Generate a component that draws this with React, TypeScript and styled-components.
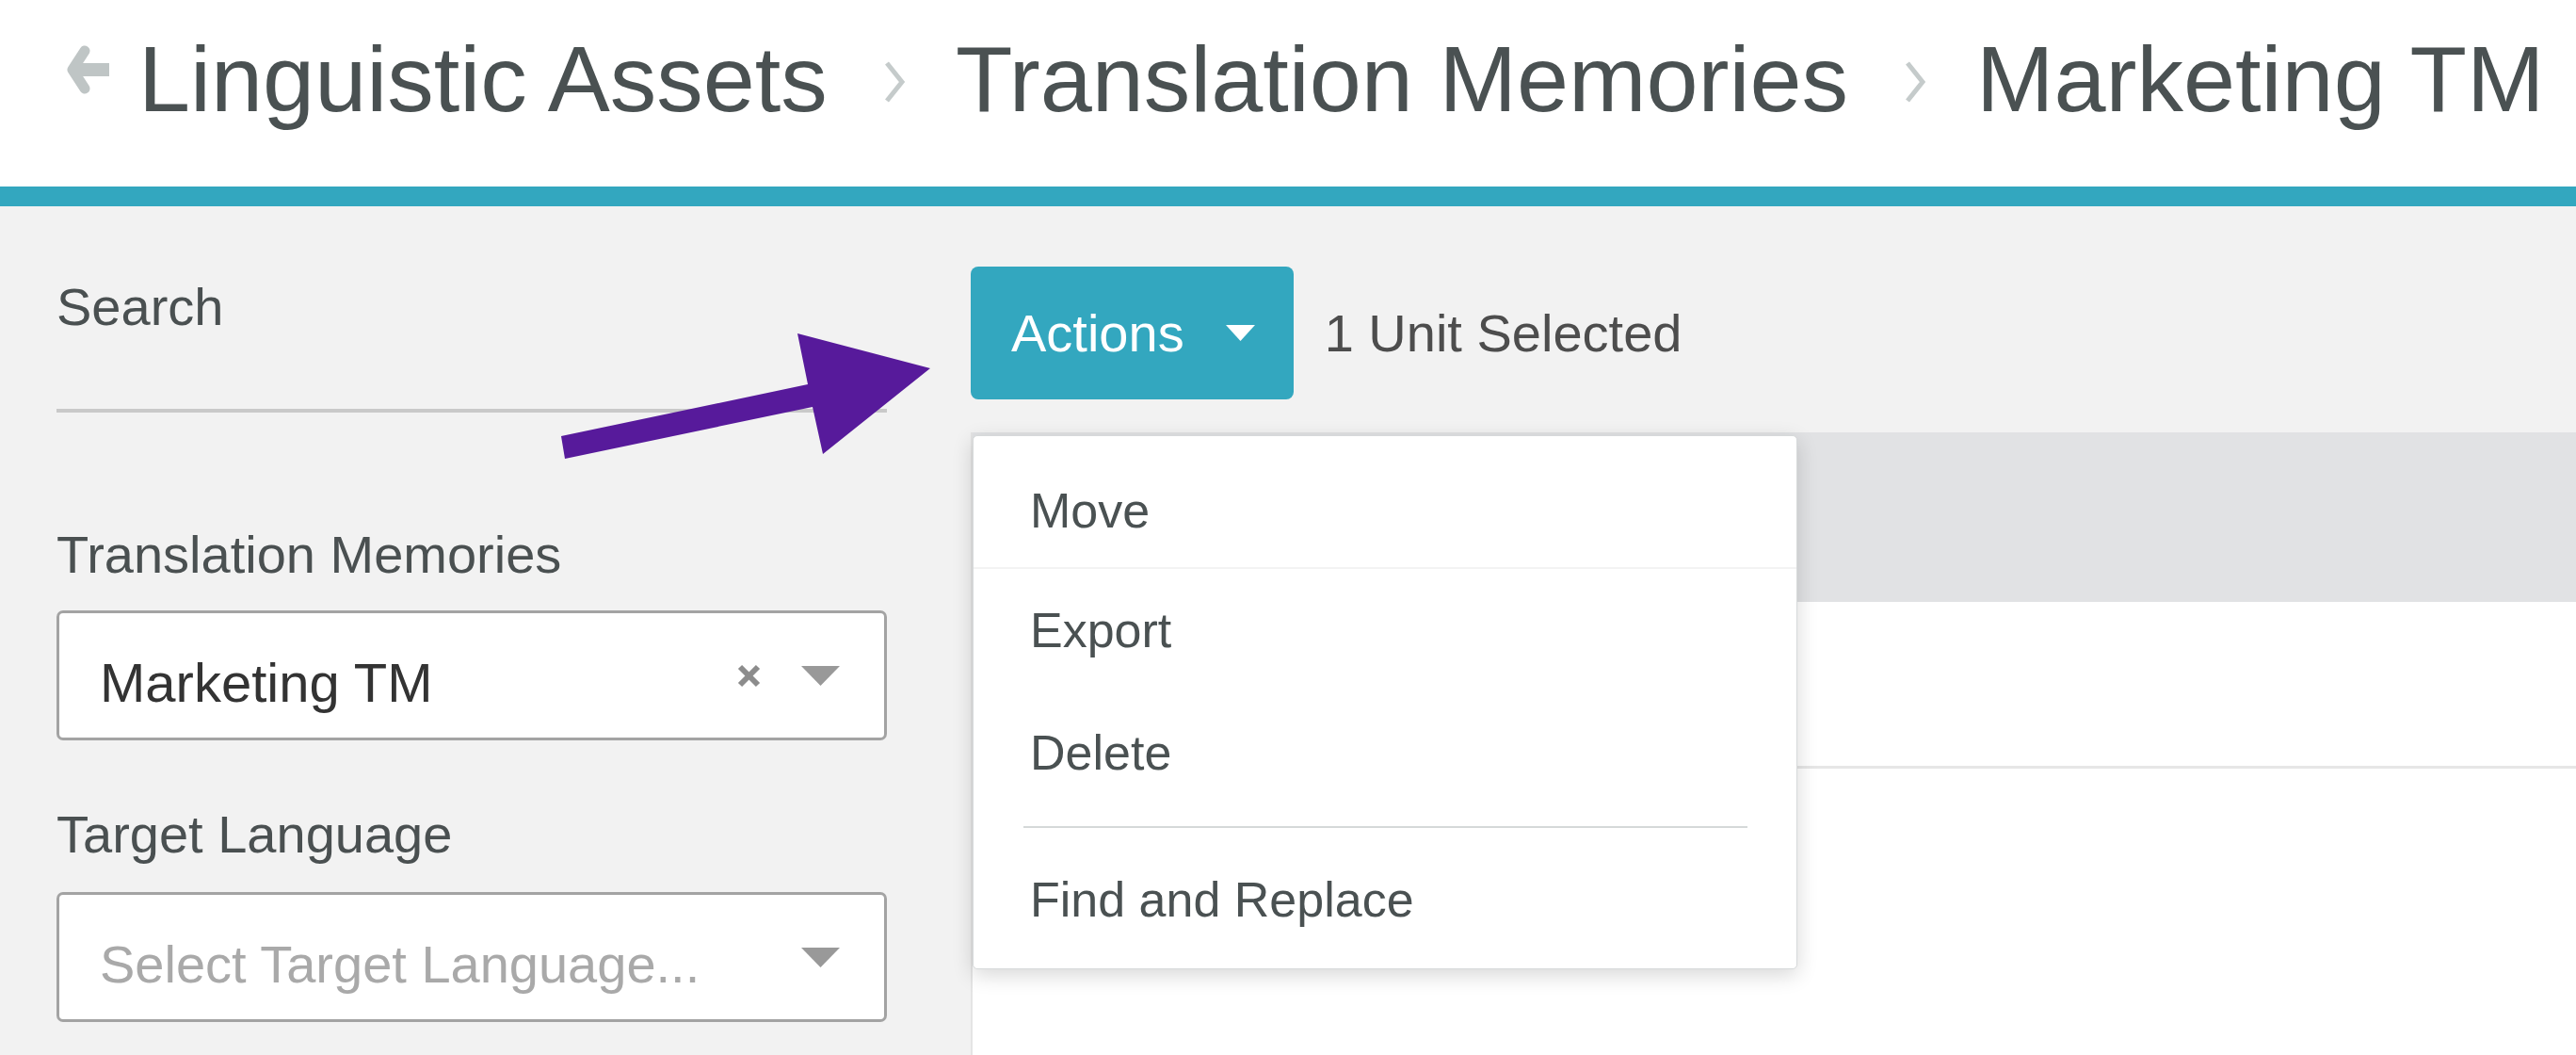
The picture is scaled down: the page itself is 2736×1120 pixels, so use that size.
import React from "react";
import styled, { createGlobalStyle } from "styled-components";

const GlobalStyle = createGlobalStyle`
  html, body {
    margin: 0;
    padding: 0;
    background: #f2f2f2;
    overflow: hidden;
  }
  body {
    font-family: "Liberation Sans", Arial, sans-serif;
  }
  * { box-sizing: border-box; }
`;

const Page = styled.div`
  position: relative;
  width: 2736px;
  height: 1120px;
  display: flex;
  flex-direction: column;
  background: #f2f2f2;
  overflow: hidden;
`;

const Header = styled.header`
  height: 219px;
  flex: none;
  display: flex;
  align-items: flex-start;
  padding: 35px 0 0 68px;
  background: #ffffff;
  border-bottom: 21px solid #33a7bf;
`;

const BackIcon = styled.svg`
  flex: none;
  width: 50px;
  height: 54px;
  margin-top: 12px;
  margin-right: 29px;
`;

const Crumb = styled.span`
  font-size: 99px;
  line-height: 98px;
  color: #4a5152;
  white-space: nowrap;
`;

const CrumbSep = styled.svg`
  flex: none;
  width: 26px;
  height: 44px;
  margin: 30px 52px 0 58px;
`;

const Body = styled.div`
  flex: 1;
  display: flex;
  min-height: 0;
`;

const Sidebar = styled.aside`
  flex: none;
  width: 1031px;
  padding: 73px 89px 0 60px;
  display: flex;
  flex-direction: column;
  gap: 66px;
`;

const Group = styled.div`
  display: flex;
  flex-direction: column;
`;

const Label = styled.label<{ $gap?: number }>`
  font-size: 56px;
  line-height: 67px;
  color: #4a5051;
  margin-bottom: ${(p) => p.$gap ?? 0}px;
  white-space: nowrap;
`;

const SearchInput = styled.div`
  height: 79px;
  border-bottom: 4px solid #c9c9c9;
  margin-bottom: 51px;
`;

const SelectBox = styled.div`
  height: 138px;
  display: flex;
  align-items: center;
  padding: 0 47px 0 43px;
  background: #ffffff;
  border: 3px solid #a3a3a3;
  border-radius: 7px;
`;

const SelectValue = styled.span<{ $placeholder?: boolean }>`
  flex: 1;
  min-width: 0;
  margin-top: 14px;
  font-size: ${(p) => (p.$placeholder ? 56 : 58)}px;
  color: ${(p) => (p.$placeholder ? "#a9a9a9" : "#333333")};
  white-space: nowrap;
  overflow: hidden;
`;

const ClearIcon = styled.svg`
  flex: none;
  width: 27px;
  height: 25px;
  margin-right: 42px;
`;

const CaretIcon = styled.svg`
  flex: none;
  width: 41px;
  height: 21px;
`;

const Main = styled.main`
  flex: 1;
  display: flex;
  flex-direction: column;
  padding-top: 64px;
  min-width: 0;
`;

const Toolbar = styled.div`
  position: relative;
  height: 141px;
  display: flex;
  align-items: center;
  flex: none;
`;

const ActionsButton = styled.button`
  height: 141px;
  display: flex;
  align-items: center;
  gap: 44px;
  padding: 0 41px 0 43px;
  border: none;
  border-radius: 8px;
  background: #33a7bf;
  color: #ffffff;
  font-family: "Liberation Sans", Arial, sans-serif;
  font-size: 56px;
`;

const ButtonCaret = styled.svg`
  width: 31px;
  height: 17px;
`;

const SelectedCount = styled.span`
  margin-left: 33px;
  font-size: 56px;
  color: #4d4d4d;
  white-space: nowrap;
`;

const Menu = styled.div`
  position: absolute;
  top: calc(100% + 38px);
  left: 2px;
  width: 876px;
  padding: 19px 0 8px;
  background: #ffffff;
  border: 1px solid #d6d9da;
  border-radius: 5px;
  box-shadow: 0 6px 22px rgba(0, 0, 0, 0.16);
  z-index: 2;
`;

const MenuItem = styled.div<{ $height: number; $divided?: boolean }>`
  height: ${(p) => p.$height + (p.$divided ? 2 : 0)}px;
  line-height: ${(p) => p.$height}px;
  padding-left: 60px;
  font-size: 52px;
  color: #4a5152;
  border-bottom: ${(p) => (p.$divided ? "2px solid #f3f3f3" : "none")};
  white-space: nowrap;
`;

const MenuSeparator = styled.div`
  height: 2px;
  margin: 13px 52px 11px 53px;
  background: #d5d9d9;
`;

const Panel = styled.section`
  flex: 1;
  margin-top: 35px;
  background: #ffffff;
  border-left: 2px solid #e4e4e4;
  display: flex;
  flex-direction: column;
`;

const PanelHeader = styled.div`
  height: 180px;
  flex: none;
  background: #e1e2e4;
`;

const PanelRow = styled.div`
  height: 177px;
  flex: none;
  border-bottom: 3px solid #e6e6e6;
`;

const Annotation = styled.svg`
  position: absolute;
  left: 590px;
  top: 350px;
  width: 405px;
  height: 140px;
  z-index: 3;
`;

const Caret = ({ color }: { color: string }) => (
  <CaretIcon viewBox="0 0 41 21">
    <polygon points="0,0 41,0 20.5,21" fill={color} />
  </CaretIcon>
);

const Chevron = () => (
  <CrumbSep viewBox="0 0 26 44">
    <polyline points="5,2 21,22 5,42" fill="none" stroke="#c5cbcb" strokeWidth="5" />
  </CrumbSep>
);

export default function App() {
  return (
    <>
      <GlobalStyle />
      <Page>
        <Header>
          <BackIcon viewBox="0 0 50 54">
            <polyline
              points="22,7 9,27 22,47"
              fill="none"
              stroke="#bfc5c5"
              strokeWidth="11"
              strokeLinecap="round"
              strokeLinejoin="round"
            />
            <line x1="12" y1="27" x2="48" y2="27" stroke="#bfc5c5" strokeWidth="14" />
          </BackIcon>
          <Crumb>Linguistic Assets</Crumb>
          <Chevron />
          <Crumb>Translation Memories</Crumb>
          <Chevron />
          <Crumb>Marketing TM</Crumb>
        </Header>
        <Body>
          <Sidebar>
            <Group>
              <Label>Search</Label>
              <SearchInput />
            </Group>
            <Group>
              <Label $gap={26}>Translation Memories</Label>
              <SelectBox>
                <SelectValue>Marketing TM</SelectValue>
                <ClearIcon viewBox="0 0 27 25">
                  <line x1="4" y1="3" x2="23" y2="22" stroke="#8c8c8c" strokeWidth="6" />
                  <line x1="23" y1="3" x2="4" y2="22" stroke="#8c8c8c" strokeWidth="6" />
                </ClearIcon>
                <Caret color="#999999" />
              </SelectBox>
            </Group>
            <Group>
              <Label $gap={28}>Target Language</Label>
              <SelectBox>
                <SelectValue $placeholder>Select Target Language...</SelectValue>
                <Caret color="#999999" />
              </SelectBox>
            </Group>
          </Sidebar>
          <Main>
            <Toolbar>
              <ActionsButton>
                Actions
                <ButtonCaret viewBox="0 0 31 17">
                  <polygon points="0,0 31,0 15.5,17" fill="#ffffff" />
                </ButtonCaret>
              </ActionsButton>
              <SelectedCount>1 Unit Selected</SelectedCount>
              <Menu>
                <MenuItem $height={120} $divided>Move</MenuItem>
                <MenuItem $height={130}>Export</MenuItem>
                <MenuItem $height={130}>Delete</MenuItem>
                <MenuSeparator />
                <MenuItem $height={130}>Find and Replace</MenuItem>
              </Menu>
            </Toolbar>
            <Panel>
              <PanelHeader />
              <PanelRow />
            </Panel>
          </Main>
        </Body>
        <Annotation viewBox="0 0 405 140">
          <polygon
            points="6,113 268,58 257,4 398,41 284,132 273,82 10,137"
            fill="#571a9b"
          />
        </Annotation>
      </Page>
    </>
  );
}
